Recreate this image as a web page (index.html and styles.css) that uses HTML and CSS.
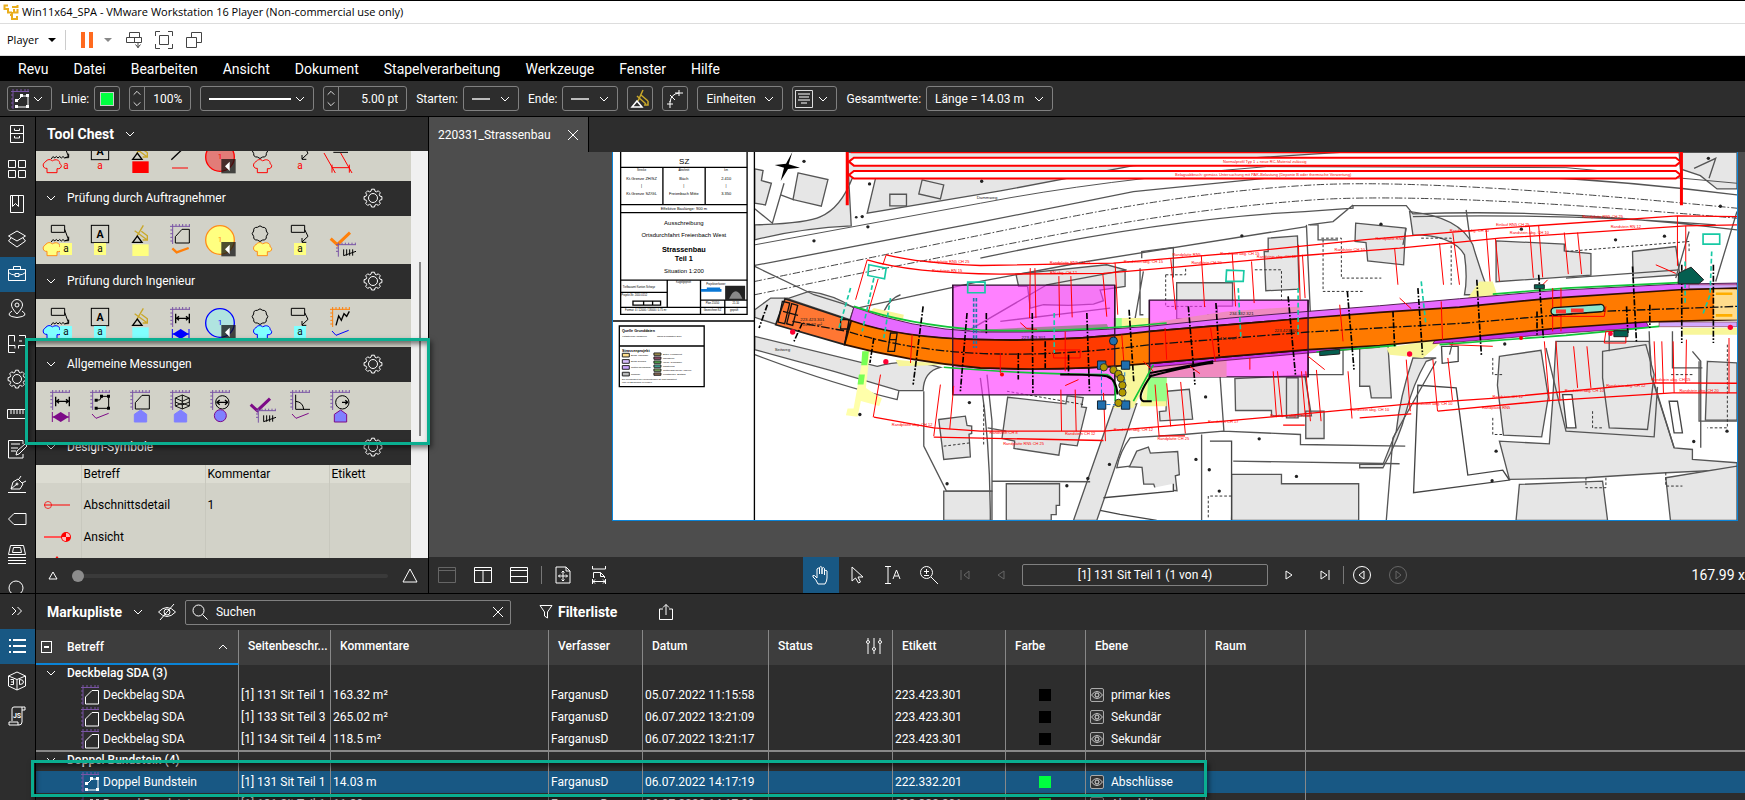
FILE: index.html
```html
<!DOCTYPE html>
<html lang="de">
<head>
<meta charset="utf-8">
<title>Win11x64_SPA - VMware Workstation 16 Player</title>
<link rel="stylesheet" href="styles.css">
</head>
<body>
<svg class="defs" aria-hidden="true">
  <symbol id="chev" viewBox="0 0 12 12"><path d="M2 4l4 4 4-4" class="ln"/></symbol>
  <symbol id="chevup" viewBox="0 0 12 12"><path d="M2 8l4-4 4 4" class="ln"/></symbol>
  <symbol id="gear" viewBox="0 0 20 20"><circle cx="10" cy="10" r="4.5" class="ln"/><path class="ln" d="M8.5 1.5h3l.5 2 1.5.6 1.800-1 2 2-1 1.800.6 1.500 2 .5v3l-2 .5-.6 1.500 1 1.800-2 2-1.800-1-1.500.6-.5 2h-3l-.5-2-1.500-.6-1.800 1-2-2 1-1.800-.6-1.500-2-.5v-3l2-.5.6-1.500-1-1.800 2-2 1.800 1 1.500-.6z" transform="translate(0 -.3)"/></symbol>
  <symbol id="ruler" viewBox="0 0 120 144"><path d="M38 24v60M30 31h60M31 42h7M31 53h7M31 64h7M31 75h7M48 24v7M58 24v7M68 24v7M78 24v7M88 24v7" stroke="var(--rule,#7a55a5)" stroke-width="3" fill="none"/></symbol>
  <symbol id="note-a" viewBox="0 0 120 144"><rect x="42" y="81" width="36" height="36" fill="var(--tint)"/><text x="60" y="108" text-anchor="middle" font-size="30" fill="var(--ink,#111)">a</text></symbol>
  <symbol id="cloudlet" viewBox="0 0 120 144"><path d="M50 119V106C38 108 34 92 45 87C50 78 62 78 66 84C76 76 90 82 88 92C98 96 92 110 80 107V119Z" transform="translate(2 0)" fill="var(--tint)" stroke="var(--edge)" stroke-width="3"/></symbol>
  <symbol id="t-callcloud" viewBox="0 0 120 144"><path d="M34 28h40v21H34zM74 40l11 30M34 78q5-12 10-3q5-9 10 0q5-9 10 0q5-9 10 0l12-5M86 62v12h-12" fill="none" stroke="#000" stroke-width="3"/><use href="#cloudlet" x="-31"/><use href="#note-a" x="18"/></symbol>
  <symbol id="t-text" viewBox="0 0 120 144"><rect x="34" y="28" width="52" height="52" fill="none" stroke="#000" stroke-width="3"/><text x="60" y="65" text-anchor="middle" font-size="32" font-weight="bold" fill="#000">A</text><use href="#note-a"/></symbol>
  <symbol id="t-mark" viewBox="0 0 120 144"><path d="M70 28L50 62M44 44L82 72M64 46l18 13M82 58v14h-14" fill="none" stroke="#c9a82a" stroke-width="4"/><path d="M38 79L52 60L66 79Z" fill="none" stroke="#000" stroke-width="4"/><rect x="37" y="85" width="49" height="35" fill="var(--tint)"/></symbol>
  <symbol id="t-area" viewBox="0 0 120 144"><use href="#ruler"/><path d="M46 81V62L66 40H88V81Z" fill="none" stroke="#000" stroke-width="3"/></symbol>
  <symbol id="t-stamp" viewBox="0 0 120 144"><circle cx="60" cy="72" r="43" fill="var(--tint2,var(--tint))" stroke="var(--edge)" stroke-width="4"/><text x="60" y="79" text-anchor="middle" font-size="24" fill="var(--edge)">1</text><rect x="64" y="78" width="43" height="43" fill="#111" opacity=".75"/><path d="M75 100l14-14v28z" fill="#fff"/></symbol>
  <symbol id="t-cloud" viewBox="0 0 120 144"><path d="M52 32q8-9 16 0q11-1 11 11q9 8 0 16q1 12-11 11q-8 9-16 0q-12 1-11-11q-9-8 0-16q-1-12 11-11z" fill="none" stroke="#000" stroke-width="3" transform="translate(0 2)"/><use href="#cloudlet"/></symbol>
  <symbol id="t-callout" viewBox="0 0 120 144"><path d="M34 28h40v21H34zM74 41l10 20l-18 17M66 66v13h13" fill="none" stroke="#000" stroke-width="3"/><use href="#note-a"/></symbol>
  <symbol id="t-count" viewBox="0 0 120 144"><path d="M32 68l20 18L90 50" fill="none" stroke="var(--mark)" stroke-width="9"/><path d="M55 80v42M48 86h60M48 96h7M48 106h7M66 80v6M76 80v6M86 80v6M96 80v6M106 80v6" stroke="#7a55a5" stroke-width="3" fill="none"/><path d="M71 100v19M80 100v19M89 100v19M98 100v19M71 119l37-13" fill="none" stroke="#000" stroke-width="3"/></symbol>
  <symbol id="t-length" viewBox="0 0 120 144"><use href="#ruler"/><path d="M47 44v29M88 44v29M50 58h35M57 52l-7 6 7 6M78 52l7 6-7 6" fill="none" stroke="#000" stroke-width="4"/><path d="M37 90v30M87 90v30M37 105h50" stroke="var(--mark)" stroke-width="3"/><path d="M38 105L62 90L86 105L62 120Z" fill="var(--mark)"/></symbol>
  <symbol id="t-poly" viewBox="0 0 120 144"><use href="#ruler"/><path d="M48 54h11L66 43H86V79H49" fill="none" stroke="#000" stroke-width="3"/><path d="M44 50h9v9h-9zM60 38h9v9h-9zM81 38h9v9h-9zM81 74h9v9h-9zM44 74h9v9h-9z" fill="#000"/><use href="#thincheck"/></symbol>
  <symbol id="thincheck" viewBox="0 0 120 144"><path d="M36 96l12 13L86 94" fill="none" stroke="var(--mark)" stroke-width="3"/></symbol>
  <symbol id="house" viewBox="0 0 120 144"><path d="M43 120V97L62 84L80 97V120Z" fill="#8080ff" stroke="var(--houseedge,#8080ff)" stroke-width="3"/></symbol>
  <symbol id="t-zig" viewBox="0 0 120 144"><use href="#ruler"/><path d="M48 79l8-28l8 13l8-20l8 8l8-15" fill="none" stroke="#000" stroke-width="4"/><use href="#thincheck"/></symbol>
  <symbol id="t-vol" viewBox="0 0 120 144"><use href="#ruler"/><path d="M46 48l21-9l21 9v24l-21 9l-21-9zM46 48l21 10l21-10M67 39v42M46 60l21 9l21-9M46 72l21-9l21 9" fill="none" stroke="#111" stroke-width="3"/></symbol>
  <symbol id="t-dia" viewBox="0 0 120 144"><use href="#ruler"/><circle cx="67" cy="61" r="20" fill="none" stroke="#000" stroke-width="3"/><path d="M51 61h32M59 54l-8 7 8 7M75 54l8 7-8 7" fill="none" stroke="#000" stroke-width="4"/><circle cx="61" cy="101" r="18" fill="#8080ff" stroke="#7d0a87" stroke-width="3"/></symbol>
  <symbol id="t-angle" viewBox="0 0 120 144"><use href="#ruler"/><path d="M47 38v44h43M47 58q22 2 24 24" fill="none" stroke="#000" stroke-width="3"/><use href="#thincheck"/></symbol>
  <symbol id="t-radius" viewBox="0 0 120 144"><use href="#ruler"/><circle cx="67" cy="61" r="20" fill="none" stroke="#000" stroke-width="3"/><path d="M66 61h16M76 55l7 6-7 6" fill="none" stroke="#000" stroke-width="4"/></symbol>
  <symbol id="r-area" viewBox="0 0 18 20"><path d="M2 0v20M0 2.500h18M0 6h2M0 10h2M0 14h2M0 18h2M6 0v2M10 0v2M14 0v2M17 0v2" stroke="#7a55a5" fill="none"/><path d="M4.500 19V12L11 5.500H17.500V19Z" fill="none" stroke="#fff"/></symbol>
  <symbol id="r-poly" viewBox="0 0 18 20"><path d="M2 0v20M0 2.500h18M0 6h2M0 10h2M0 14h2M0 18h2M6 0v2M10 0v2M14 0v2M17 0v2" stroke="#7a55a5" fill="none"/><path d="M6 12l5-5h6v11H6" fill="none" stroke="#fff"/><path d="M4 10h3v3H4zM9 5h3v3H9zM15 5h3v3h-3zM15 16h3v3h-3zM4 16h3v3H4z" fill="#fff"/></symbol>
  <symbol id="eye" viewBox="0 0 14 14"><rect x=".5" y=".5" width="13" height="13" rx="1.500" fill="#333" stroke="#aaa"/><path d="M1.500 7q5.500-7 11 0q-5.500 7-11 0z" fill="none" stroke="#ccc"/><circle cx="7" cy="7" r="2" fill="none" stroke="#ddd"/></symbol>
</svg>

<header class="titlebar">
  <svg class="vmlogo" viewBox="0 0 18 18"><path d="M6 2.500H2.500V7M2 6h4v3.500h4M10 4h5.500V2M12 6v3.500h3.500V6M10 9v7h5v-3M8 12h3" fill="none" stroke="#e9ae1c" stroke-width="2"/></svg>
  <span>Win11x64_SPA - VMware Workstation 16 Player (Non-commercial use only)</span>
</header>
<div class="playerbar">
  <button class="player">Player <i class="tri"></i></button>
  <button class="pause" aria-label="Pause"><i></i><i></i></button>
  <i class="tri grey"></i>
  <button aria-label="Senden"><svg width="18" height="18" viewBox="0 0 18 18" class="dark"><path d="M4.500 1.500h10v5h-10zM1.500 6.500h8v5h-8zM9.500 6.500h7v5h-7zM13 11v6M10.500 13.500l2.500 3 2.500-3"/></svg></button>
  <button aria-label="Vollbild"><svg width="18" height="18" viewBox="0 0 18 18" class="dark"><path d="M4.500 4.500h9v9h-9zM.500 5V.500H5M13 .500h4.500V5M17.500 13v4.500H13M5 17.500H.500V13"/></svg></button>
  <button aria-label="Unity"><svg width="18" height="18" viewBox="0 0 18 18" class="dark"><path d="M6.500 6V1.500h10v10H12M1.500 6.500h10v10h-10z"/></svg></button>
</div>
<nav class="menu">
  <button>Revu</button><button>Datei</button><button>Bearbeiten</button><button>Ansicht</button><button>Dokument</button><button>Stapelverarbeitung</button><button>Werkzeuge</button><button>Fenster</button><button>Hilfe</button>
</nav>
<div class="props">
  <button class="ctl w44" aria-label="Werkzeug"><svg width="20" height="20" viewBox="0 0 18 20"><use href="#r-poly"/></svg><svg class="ch"><use href="#chev"/></svg></button>
  <span class="grp">Linie:<button class="ctl w25" aria-label="Farbe"><i class="green"></i></button></span>
  <span class="ctl spin"><span class="ud"><svg><use href="#chevup"/></svg><svg><use href="#chev"/></svg></span><input value="100%" aria-label="Deckkraft" class="w46"></span>
  <button class="ctl linesel" aria-label="Linienart"><i class="line"></i><svg class="ch"><use href="#chev"/></svg></button>
  <span class="ctl spin"><span class="ud"><svg><use href="#chevup"/></svg><svg><use href="#chev"/></svg></span><input value="5.00 pt" aria-label="Linienbreite" class="w66"></span>
  <span class="grp">Starten:<button class="ctl w56" aria-label="Linienanfang"><i class="dash"></i><svg class="ch"><use href="#chev"/></svg></button></span>
  <span class="grp">Ende:<button class="ctl w56" aria-label="Linienende"><i class="dash"></i><svg class="ch"><use href="#chev"/></svg></button></span>
  <button class="ctl w25" aria-label="Hervorheben"><svg width="20" height="20" viewBox="0 0 20 20"><path d="M13 1L8 12M7 7l9 8M11 6l7 6M18 12v4h-4" fill="none" stroke="#c9a82a" stroke-width="1.500"/><path d="M2 18l5-6 5 6z" fill="none" stroke="#fff" stroke-width="1.500"/></svg></button>
  <button class="ctl w25" aria-label="Bogen"><svg width="20" height="20" viewBox="0 0 20 20" class="lt"><path d="M5 12v7M2 15h6M10 4h8M14 1v6M5 13q1-8 9-9M5 6l5 5"/></svg></button>
  <button class="ctl w86">Einheiten<svg class="ch"><use href="#chev"/></svg></button>
  <button class="ctl w44" aria-label="Beschriftung"><svg width="18" height="18" viewBox="0 0 18 18"><path d="M.500 .500h17v17H.500z" fill="none" stroke="#ddd"/><path d="M3 4h12M4 7h10M3 10h12M6 13h6" stroke="#bbb" stroke-width="1.500"/></svg><svg class="ch"><use href="#chev"/></svg></button>
  <span class="grp">Gesamtwerte:<button class="ctl total">Länge = 14.03 m<svg class="ch"><use href="#chev"/></svg></button></span>
</div>

<div class="work">
  <nav class="rail">
    <button aria-label="Dateizugriff"><svg viewBox="0 0 20 20" class="lt"><path d="M3.500 1.500h13v17h-13zM3.500 9.500h13M7.500 4.500v2h5v-2M7.500 12v2h5v-2"/></svg></button>
    <button aria-label="Miniaturansichten"><svg viewBox="0 0 20 20" class="lt"><path d="M1.500 1.500h7v7h-7zM11.500 1.500h7v7h-7zM1.500 11.500h7v7h-7zM11.500 11.500h7v7h-7z"/></svg></button>
    <button aria-label="Lesezeichen"><svg viewBox="0 0 20 20" class="lt"><path d="M3.500 1.500h13v17h-13zM5.500 1.500v11l3-3 3 3v-11"/></svg></button>
    <button aria-label="Ebenen"><svg viewBox="0 0 20 20" class="lt"><path d="M10 2l8.500 5-8.500 5-8.500-5zM4 9l-2.500 3 8.500 6 8.500-6L16 9"/></svg></button>
    <button class="on" aria-label="Tool Chest"><svg viewBox="0 0 20 20" class="lt"><path d="M1.500 5.500h17v11h-17zM6.500 5V2.500h7V5M1.500 8.500q3 2.500 6.500 2.500M18.500 8.500q-3 2.500-6.500 2.500M8 9.500v3h4v-3z"/></svg></button>
    <button aria-label="Orte"><svg viewBox="0 0 20 20" class="lt"><path d="M10 15Q4.500 9 4.500 6a5.500 5.500 0 0 1 11 0Q15.500 9 10 15zM5 12q-8 5 5 6.500q13-1.500 5-6.500"/><circle cx="10" cy="6" r="2"/></svg></button>
    <button aria-label="Räume"><svg viewBox="0 0 20 20" class="lt"><path d="M8 18.500H1.500v-17h6v6M12 1.500h6.500v10h-7v3M1.500 11.500H8v3M12 7h3"/></svg></button>
    <button aria-label="Einstellungen"><svg><use href="#gear"/></svg></button>
    <button aria-label="Messungen"><svg viewBox="0 0 20 20" class="lt"><path d="M.500 5.500h19v9H.500zM4 6v4M7 6v4M10 6v4M13 6v4M16 6v4"/></svg></button>
    <button aria-label="Formular"><svg viewBox="0 0 20 20" class="lt"><path d="M16 15v4H1.500V1.500H16V5M4 5h9M4 9h7M4 12h5M9 16l1-4 8-7 2 2-8 8z"/></svg></button>
    <button aria-label="Signaturen"><svg viewBox="0 0 20 20" class="lt"><path d="M1 18.500h18M4 15l2-7 5-3 5 5-3 5zM4 15l6-5M12 5l2-3M15 9l4-2"/><circle cx="10" cy="10" r="1"/></svg></button>
    <button aria-label="Etiketten"><svg viewBox="0 0 20 20" class="lt"><path d="M7 4.500h12v11H7l-5.500-5.500z"/></svg></button>
    <button aria-label="Sets"><svg viewBox="0 0 20 20" class="lt"><path d="M3.500 1.500h13l2 9h-17zM6.500 3.500h7l1 5h-9zM1 13.500h18M1 16.500h18M1 19.500h18"/></svg></button>
    <button aria-label="Suche"><svg viewBox="0 0 20 20" class="lt"><circle cx="9" cy="9" r="7"/><path d="M14 14l4 5"/></svg></button>
  </nav>
  <section class="chest">
    <h2>Tool Chest <svg class="ch"><use href="#chev"/></svg></h2>
    <div class="chestbody">
      <div class="sets">
        <div class="tools first red">
          <svg><use href="#t-callcloud"/></svg><svg><use href="#t-text"/></svg><svg><use href="#t-mark"/></svg>
          <svg viewBox="0 0 120 144"><path d="M34 80L70 46" stroke="#000" stroke-width="4"/><path d="M36 105h48" stroke="red" stroke-width="3"/></svg>
          <svg><use href="#t-stamp"/></svg><svg><use href="#t-cloud"/></svg><svg><use href="#t-callout"/></svg>
          <svg viewBox="0 0 120 144"><path d="M12 60l34 60M62 60l34 60M36 104h52M36 95v24M88 95v24" stroke="red" stroke-width="3"/><path d="M40 58h44" stroke="#000" stroke-width="3"/></svg>
        </div>
        <h3><svg class="ch"><use href="#chev"/></svg>Prüfung durch Auftragnehmer<svg class="gear"><use href="#gear"/></svg></h3>
        <div class="tools yellow">
          <svg><use href="#t-callcloud"/></svg><svg><use href="#t-text"/></svg><svg><use href="#t-mark"/></svg>
          <svg viewBox="0 0 120 144"><use href="#t-area"/><path d="M37 97l13 12L86 96" fill="none" stroke="#ff800a" stroke-width="7"/></svg>
          <svg><use href="#t-stamp"/></svg><svg><use href="#t-cloud"/></svg><svg><use href="#t-callout"/></svg><svg><use href="#t-count"/></svg>
        </div>
        <h3><svg class="ch"><use href="#chev"/></svg>Prüfung durch Ingenieur<svg class="gear"><use href="#gear"/></svg></h3>
        <div class="tools cyan">
          <svg><use href="#t-callcloud"/></svg><svg><use href="#t-text"/></svg><svg><use href="#t-mark"/></svg><svg><use href="#t-length"/></svg>
          <svg><use href="#t-stamp"/></svg><svg><use href="#t-cloud"/></svg><svg><use href="#t-callout"/></svg><svg class="orule"><use href="#t-zig"/></svg>
        </div>
        <h3><svg class="ch"><use href="#chev"/></svg>Allgemeine Messungen<svg class="gear"><use href="#gear"/></svg></h3>
        <div class="tools purple">
          <svg><use href="#t-length"/></svg><svg><use href="#t-poly"/></svg>
          <svg viewBox="0 0 120 144"><use href="#t-area"/><use href="#house"/></svg>
          <svg viewBox="0 0 120 144"><use href="#t-vol"/><use href="#house"/></svg>
          <svg><use href="#t-dia"/></svg><svg><use href="#t-count"/></svg><svg><use href="#t-angle"/></svg>
          <svg viewBox="0 0 120 144" class="hedge"><use href="#t-radius"/><use href="#house"/></svg>
        </div>
        <h3><svg class="ch"><use href="#chev"/></svg>Design-Symbole<svg class="gear"><use href="#gear"/></svg></h3>
        <table class="symbols">
          <colgroup><col class="c45"><col class="c124"><col class="c124"><col></colgroup>
          <thead><tr><th></th><th>Betreff</th><th>Kommentar</th><th>Etikett</th></tr></thead>
          <tbody>
            <tr class="tall"><td><svg viewBox="0 0 30 12"><circle cx="5" cy="6" r="3.500" fill="none" stroke="#e33"/><path d="M1 6h26" stroke="red"/></svg></td><td>Abschnittsdetail</td><td>1</td><td></td></tr>
            <tr><td><svg viewBox="0 0 30 12"><path d="M1 6h18" stroke="#f55" stroke-width="2"/><circle cx="23" cy="6" r="5" fill="red"/><path d="M23 6V2a4 4 0 0 1 4 4zM23 6v4a4 4 0 0 1-4-4z" fill="#fbb"/></svg></td><td>Ansicht</td><td></td><td></td></tr>
            <tr class="tip"><td><svg viewBox="0 0 30 12"><path d="M14 1l3 4h-6z" fill="red"/></svg></td><td></td><td></td><td></td></tr>
          </tbody>
        </table>
      </div>
      <div class="gutter"><i></i></div>
    </div>
    <div class="sizer">
      <svg width="10" height="9" viewBox="0 0 10 9" class="lt"><path d="M5 1L1 8h8z"/></svg>
      <input type="range" min="0" max="100" value="0" aria-label="Symbolgrösse">
      <svg width="16" height="15" viewBox="0 0 16 15" class="lt"><path d="M8 1L1 14h14z"/></svg>
    </div>
    <div class="callbox tools-box"></div>
  </section>
  <main class="doc">
    <div class="tabs"><div class="tab">220331_Strassenbau<button aria-label="Schliessen"><svg width="12" height="12" viewBox="0 0 12 12" class="lt"><path d="M1 1l10 10M11 1L1 11"/></svg></button></div></div>
    <div class="canvas">
      <svg class="plan" viewBox="36 21 3378 1107" preserveAspectRatio="xMinYMin slice">
        <defs>
          <path id="road" d="M752 528Q900 580 1140 585Q1400 592 1650 560L2125 520L2340 503L2580 487L2860 460L3240 435L3414 430V525L3140 532L2880 550L2580 580L2340 603L2125 615L1890 635L1640 657Q1400 680 1140 670Q920 650 732 600Z"/>
          <clipPath id="c1"><path d="M1057 421h487v330h-487zM1648 466h477v231h-477z"/></clipPath>
        </defs>
        <rect x="36" y="21" width="3378" height="1107" fill="#fff"/>
        <!-- parcels and roads -->
        <g fill="#e6e6e6" stroke="#555" stroke-width="4">
          <path d="M462 240Q620 235 660 215Q720 190 755 100H825L800 205L1200 138L1600 62L2220 22H1100L740 22L752 243Q600 250 462 285Z"/>
          <path d="M462 72l25 5l-5 30l30 8l-18 65l-32-5zM592 84l90 20l-20 80l-85-20zM868 148h50v35h-50zM965 105l65 15l-10 42l-65-15z"/>
          <path d="M462 495L510 460H560L530 540L462 518ZM625 440Q700 450 760 490L748 525L560 462Z"/>
          <path d="M462 575L830 665Q920 640 1020 668Q970 680 968 738H895L700 680L462 615Z"/>
          <path d="M1015 825l80-10l5 28l14 2v22l-8 2l4 68l-80 8zM1030 1040h145v88h-145z"/>
          <path d="M1247 388L1520 360L1575 375V425L1500 436L1510 468L1480 478L1405 482L1330 480L1290 490L1282 425L1255 425Z"/>
          <path d="M1222 758l175 20l4-24l48 5l-5 28l15 2l-28 115l-50-6l-5 34l-135-20l2-22l-38-8zM1218 1018h160v65h-10v28h-15v17h-135z"/>
          <path d="M1730 414h168v70h-46v26h-28v12h-94zM2005 280l88-7l5 160l-100 5l-5-118h12zM1700 740l68-6l10 90l-98 5l-2-28l20-2zM1610 920l35-12l6 18l82-5l5 70l-12 3l5 45l-65-5l-5-15h-30l-5-50l-38-2z"/>
          <path d="M1905 702l210-10l20 122h-120v-16h-108zM2060 700h35v120h-35zM2118 800h55v82h-55zM1895 990h150v28h232v110h-382z"/>
          <path d="M1540 785L1610 778L1490 1128H1420Z"/>
          <path d="M2268 235l150 15l-6 110l-108-12l-5-55l-33-3z"/>
          <path d="M2430 200Q2580 215 2620 300Q2640 370 2670 450H2595Q2605 400 2595 330Q2560 270 2440 270Z"/>
          <path d="M2690 288l205 10v20l80 8v65l-285 20zM3100 320l130-15l12 85l-140 10z"/>
          <path d="M2280 600h85l10 160h-60l-5-35h-30zM2510 640L2440 640Q2400 760 2390 860L2350 960H2280V970H2350Q2400 880 2420 800Q2440 720 2480 650Z"/>
          <path d="M2870 590L3150 590L3160 700L3225 910L3280 915V945L3414 955V975L3200 985L2960 1000L2730 1005L2700 890L2850 898L2860 770Z"/>
          <path d="M2700 635l125-18l22 140l-20 120l-115-5l-18-150zM3010 620l130-20l25 90l-20 165l-115-5l-20-150z"/>
          <path d="M2760 1020l250-10l15 118h-275zM3200 1000l214-35v163h-200zM3325 650l89 5v172h-95zM3240 22h174v110h-60l-50-40l-60-20z"/>
        </g>
        <g fill="#fff" stroke="#444" stroke-width="4">
          <path d="M2455 722l115 8l35 262l105-15l20 30l-288 38zM2526 605h50v45l-48 6z"/>
          <path d="M1830 890h65v238M1510 1060l210-20v-22M1500 1098l60 12l110 18M2890 750h28l12 100h-28zM3210 770h25l15 95h-25z"/>
        </g>
        <!-- railway and parcel lines -->
        <g fill="none" stroke="#555" stroke-width="4">
          <path d="M462 362L1140 232L1600 140L2115 88M2400 85Q2900 85 3414 150M462 365L640 450L770 490M770 490L1140 410L1460 350L2120 245"/>
          <path d="M1140 340Q1700 220 2115 200L2260 190V182H2420l20 25Q2900 190 3414 255M2260 180l-60 50l-75 10M2420 250l-10 50M2440 215Q2900 205 3350 240"/>
          <path d="M462 300L1140 175Q1500 105 2000 65L2900 68L3414 115" stroke-width="3"/>
          <path d="M462 630Q700 720 890 765L895 740M970 740V905L1038 1040H1175V830L1160 690M1162 850L1218 860M1175 1010L1470 1012M460 190l55 45l35-120M540 150l40 15M1100 560L1340 420L1580 375M900 450Q870 460 850 500"/>
          <path d="M1140 700Q1170 900 1170 1128M1200 530L1530 490M1630 380l-30 170M1870 860L1750 870L1590 880Q1560 920 1550 970l40-5M2120 240l12 270M2130 240l25 0v45h60M1630 510h-10v-140M1625 340v-20l95-12v90M1860 690l12 170l230 10v30l315 5M1805 870v258M1900 950L2400 958M2230 600v90h-120"/>
          <path d="M2600 195l12 90M3150 560l5 130l70 220M2840 610l60 250l265 17l10-150M2560 590l-10 40M3330 100l20-60l-65 30M3030 560v60M3270 260L3230 400M3414 200L3350 410M2510 650L2380 880L2360 1128M3280 620l25 30v260M3220 560v110h90M3300 650v180h114M2900 400l340-25"/>
        </g>
        <g fill="none" stroke="#444" stroke-width="3" stroke-dasharray="22 6 5 6">
          <path d="M462 410Q900 320 1340 230T2140 120T3414 190M462 450Q900 360 1340 275T2140 165T3414 220"/>
        </g>
        <g fill="none" stroke="#333" stroke-width="3" stroke-dasharray="8 6">
          <path d="M1697 390h60v-25M1697 390v95h120M1965 375h80v90M2165 280h60v120h120M2170 285v155h120M2465 280h90v140M2680 640v50h30M2900 320l370-30v30M2680 820v50h30M2980 800v50h30M1220 740l230 40M1895 1055h-70v70M3280 690h-70M3385 600v250h-60M1030 905l80-10M1150 780v120M2960 1000v30h60v-30M3200 985v40h50"/>
        </g>
        <!-- greens and yellows -->
        <path d="M790 620h18l-12 110l48 32l-8 22l-55-15l-10 48l-35-5l5-20h18z" fill="#ffffaa"/>
        <path d="M785 620h20l-5 42h-18zM775 690h18l-4 30h-18z" fill="#7f5"/>
        <path d="M820 490l90 20l-5 25l-100-30zM885 645l170 15l-160 5zM1545 520h105v170l-50 100h-60l40-60l-35-50zM1640 690h60v95h-80zM2360 610l180-30l-70 60l-100-10zM2640 410l40 0l15 45l-90 5zM3250 570h164v-20h-164z" fill="#f8f69a"/>
        <path d="M1540 520h25v60h-25zM1645 695h55v75h-60z" fill="#9f8"/>
        <!-- markup squares -->
        <g fill="#ff33ff" fill-opacity=".62" stroke="#301030" stroke-width="4"><path d="M1057 421h487v330h-487zM1648 466h477v231h-477z"/></g>
        <path d="M1648 535L1880 500L2100 485V500L1648 548ZM1650 660L1880 640V697H1650Z" fill="#f08ac0"/>
        <path d="M1140 555L1520 538L1530 560L1140 578Z" fill="#a8809c"/>
        <!-- pavement -->
        <path d="M760 487Q920 550 1140 562Q1400 565 1648 545L1890 520L2125 500L2340 483L2580 462L2870 437L3230 418L3414 415V435L3240 437L2860 462L2580 489L2340 506L2125 523L1650 563Q1400 592 1140 585Q900 580 748 528Z" fill="#e66aff" stroke="#502050" stroke-width="3"/>
        <path d="M2510 580L2900 547L3140 530L3150 548L2900 565L2600 590L2500 597ZM1650 657L2125 614L2340 602V608L2125 625L1650 668Z" fill="#c932e8" stroke="#402" stroke-width="2"/>
        <path d="M3270 420h144v12h-144zM3180 532h234v14h-234z" fill="#d2a8ff" stroke="#844" stroke-width="2"/>
        <!-- carriageway -->
        <path d="M553 462L752 528L732 600L525 540Z" fill="#ff7733" stroke="#222" stroke-width="5"/>
        <use href="#road" fill="#ff7a00" stroke="#301000" stroke-width="5"/>
        <use href="#road" fill="#ff3a00" stroke="#301000" stroke-width="5" clip-path="url(#c1)"/>
        <path d="M1057 421v330M1544 421v330M1648 466v231M2125 466v231" stroke="#301030" stroke-width="4"/>
        <path d="M3344 434h70v91h-70z" fill="#ffdc8c"/><path d="M3350 447h50M3350 512h50" stroke="#ffae00" stroke-width="8"/>
        <path d="M575 530L740 560Q950 625 1200 628Q1400 632 1650 600L2125 562L2600 535L3000 500L3414 485" fill="none" stroke="#111" stroke-width="4" stroke-dasharray="26 6 6 6"/>
        <path d="M760 485Q920 540 1140 556Q1400 565 1700 535M1030 668Q1300 690 1520 690Q1550 700 1545 770M1660 660L1600 770M2520 600L2900 572L3180 545M2680 448L2900 430L3270 412M2150 622l240-20" fill="none" stroke="#12c53a" stroke-width="5"/>
        <path d="M745 528l-13 72M545 470l22 5l-15 62l-20-5zM573 477l18 5l-15 60l-18-5zM720 525h25v28h-25zM870 565h20l-8 55h-20zM547 500l45 12M868 585h20" fill="none" stroke="#111" stroke-width="4"/>
        <path d="M1380 690Q1480 690 1520 695Q1550 705 1552 750M1655 690Q1605 760 1630 770h25M1650 695Q1780 660 1840 655M1650 685L1840 650" fill="none" stroke="#000" stroke-width="6"/>
        <!-- long boundary bars -->
        <g fill="none" stroke="#f00" stroke-width="6">
          <path d="M740 21v160M3247 21v160" stroke-width="9"/>
          <path d="M750 22H3240M745 50l15-12H3230l15 12l-15 12H760zM745 90l15-12H3230l15 12l-15 11H760z" fill="#fff"/>
        </g>
        <!-- dimension chains -->
        <g fill="none" stroke="#f00" stroke-width="3">
          <path d="M857 330Q960 355 1140 362L1540 355L1900 325L2290 285L2560 262L2700 250L3235 213L3414 215M800 345Q930 385 1200 388L1510 386L1720 368L2110 332L2400 310L2700 280L3260 243L3414 240M820 818L1000 850L1140 860L1510 860L1700 845L2040 815L2430 778L2700 760L3170 715L3414 716M1000 878L1510 888M1675 874h80M2050 842h65M2280 820L2435 808M2515 800L2850 768L3220 745L3414 745" stroke-width="4"/>
          <path d="M857 330l-10 30M800 345l-35 120M833 402l-30 100M840 690l-22 128M1020 720l-20 155M1060 724l-12 130M1290 370l-2 150M1304 370l3 150M1376 394l2 124M1412 394l4 124M1508 386l12 130M1545 355l8 155M1712 340l15 155M1804 332l10 155M1897 325l10 160M1955 350l8 125M2096 300l5 165M2108 330l8 130M2385 310l10 110M2520 295l12 125M2560 265l20 155M2660 255l12 155M2688 280l12 130M2790 244l12 155M2818 243l12 155M2895 263l12 125M2935 263l12 125M3235 213v150M3260 243v140M1382 735l2 125M1425 735l3 125M1510 745l6 145M1665 720l12 152M1700 716l12 130M1742 712l14 155M2020 680l10 138M2033 680l14 138M2105 680l12 138M2118 680l14 150M2150 676l14 154M2245 680l12 142M2420 645l12 155M2500 645l14 155M2545 640l14 127M2835 590l15 180M2870 590l12 178M2923 605l12 125M2963 605l12 125M3165 590l5 125M3188 590l5 155M3222 590l3 155M3262 585l-2 130M3390 580v165M1200 625v60M1395 560v120M1565 570l6 80M1695 550l5 95M1832 550l14 100M2220 480l10 110M2525 470l4 115M935 570l-5 85M2860 430v130M2885 430v130M1360 640h80v-24h-80zM2855 515h160l5-30M3020 560h60v35h-65z"/>
          <path d="M1260 534l20 18l30 2M1435 705l-40 18M1770 665l30 22M2125 635l50 40M2400 460l35 32M2680 605l-130 -5M3170 360l60 26M2845 405l-20 20M1630 650l30 30M1950 640v35"/>
        </g>
        <g fill="#f00"><circle cx="576" cy="562" r="8" fill="#f03"/><circle cx="856" cy="651" r="8" fill="#f03"/><circle cx="1205" cy="690" r="6"/><circle cx="2430" cy="628" r="8" fill="#f03"/><circle cx="3034" cy="567" r="7" fill="#f03"/><circle cx="3394" cy="548" r="8" fill="#f03"/><circle cx="2765" cy="580" r="6"/></g>
        <!-- cross sections -->
        <g fill="none" stroke="#000" stroke-width="5" stroke-dasharray="18 5 5 5">
          <path d="M500 480l-25 70M605 535l-25 55M820 580l-12 75M968 485l-30 235M1100 505l-20 235M1158 505v65M1296 505l2 240M1460 505l8 235M1587 495l14 215M1765 485l20 235M1848 475l10 165M2065 455l22 235M2243 440l20 235M2455 430l14 200M2632 405l14 230M2818 390l14 190M3100 365l12 230M3248 360v235M3343 360v235M1254 625v80M1335 590v80M1405 630v60M2380 500l5 105M2813 500v70M3082 485l4 80M3152 480v70"/>
        </g>
        <g fill="none" stroke="#17c9a4" stroke-width="5">
          <path d="M805 360l52 10l-5 32l-50-10zM1102 412h52v32h-52zM1880 376l52 2l-2 32h-52zM3312 268h50v30h-50z"/>
          <path d="M750 430l-35 120M820 400l-35 160M870 460l-20 120M1362 505v120M1915 430l8 150M2095 430v140M2465 410l14 130M3258 350v130M3338 320l-5 130l-22 60" stroke-dasharray="14 8"/>
          <path d="M1120 460v150M1128 460v150" stroke="#2078a8" stroke-dasharray="10 6"/>
        </g>
        <path d="M3238 385l38-18l38 38l-15 12h-62zM2805 420h30v12h-30zM3044 558h42v18h-42zM2160 620l60-6v14l-60 5z" fill="#055f50" stroke="#222" stroke-width="3"/>
        <rect x="2855" y="484" width="160" height="22" rx="11" fill="#8ce6cc" stroke="#111" stroke-width="4" transform="rotate(-4 2935 495)"/><path d="M2870 500h30M2915 497h38" stroke="#f33" stroke-width="12"/>
        <!-- selected polyline handles -->
        <path d="M1504 655v125h70V665" fill="none" stroke="#1a7fd4" stroke-width="3" stroke-dasharray="12 8"/>
        <g fill="#206fae" stroke="#123" stroke-width="3"><path d="M1492 649h25v25h-25zM1564 649h25v25h-25zM1492 769h25v25h-25zM1564 769h25v25h-25z"/><circle cx="1540" cy="589" r="12"/></g>
        <g fill="#b29a00" stroke="#333" stroke-width="3"><circle cx="1511" cy="668" r="11"/><circle cx="1540" cy="676" r="11"/><circle cx="1555" cy="688" r="11"/><circle cx="1562" cy="701" r="11"/><circle cx="1567" cy="722" r="11"/><circle cx="1567" cy="744" r="11"/><circle cx="1555" cy="775" r="11"/></g>
        <g fill="#222"><circle cx="640" cy="288" r="5"/><circle cx="610" cy="49" r="5"/><circle cx="807" cy="117" r="5"/><circle cx="785" cy="215" r="5"/><circle cx="767" cy="217" r="4"/><circle cx="802" cy="246" r="5"/><circle cx="1107" cy="774" r="5"/><circle cx="778" cy="810" r="5"/><circle cx="1040" cy="1018" r="5"/><circle cx="1144" cy="109" r="5"/><circle cx="1926" cy="273" r="5"/><circle cx="1817" cy="757" r="5"/><circle cx="1788" cy="945" r="5"/><circle cx="1828" cy="976" r="5"/><circle cx="1858" cy="1040" r="5"/><circle cx="1528" cy="960" r="5"/><circle cx="1463" cy="1002" r="5"/><circle cx="1400" cy="1024" r="5"/><circle cx="1978" cy="883" r="5"/><circle cx="2090" cy="996" r="5"/><circle cx="2344" cy="238" r="5"/><circle cx="2766" cy="253" r="5"/><circle cx="3049" cy="285" r="5"/><circle cx="3196" cy="274" r="5"/><circle cx="2678" cy="1009" r="5"/><circle cx="2690" cy="920" r="5"/><circle cx="3284" cy="891" r="5"/><circle cx="3384" cy="860" r="5"/><circle cx="2716" cy="598" r="5"/><circle cx="3364" cy="184" r="5"/><circle cx="3328" cy="40" r="5"/></g>
        <path d="M575 21L564 58L598 68L562 72L540 108L550 68L522 60L556 56Z" fill="#000"/>
        <!-- labels -->
        <g class="lab">
          <text x="1995" y="53">Normalprofil Typ 1 + neue RC-Material zulässig</text><text x="1990" y="93">Belagsabbruch: gemäss Untersuchung mit PAK-Belastung (Deponie B oder thermische Verwertung)</text>
          <text x="1046" y="354">Randplatte RN5 CH 25</text><text x="1040" y="383">Randstein RN 15</text><text x="1410" y="358">Randplatte RN5 CH 25</text><text x="1390" y="387">RN abg. CH 12</text><text x="1630" y="355">Randstein abg. CH 15</text><text x="1760" y="333">Randplatte RN5</text><text x="1920" y="330">Randstein abg. CH 15</text><text x="1820" y="358">Randstein CH 20</text><text x="2030" y="340">Randstein abg. CH 10</text><text x="2250" y="320">Randstein CH 10</text><text x="2370" y="287">Randplatte RN5</text><text x="2610" y="262">Randstein abg. CH 10</text><text x="2740" y="243">Einlauf RN5 CH 25</text><text x="3010" y="220">Randplatte RN5 CH 25</text><text x="3080" y="248">Randstein RN 12</text><text x="2790" y="268">Randstein abg. CH 10</text>
          <text x="935" y="846">Randplatte abg. CH 12</text><text x="1210" y="870">Randstein CH 8</text><text x="1440" y="872">Randstein CH 12</text><text x="1270" y="903">Randplatte RN5 CH 25</text><text x="1600" y="859">Randstein abg. CH 12</text><text x="1720" y="886">Randplatte CH 25</text><text x="1870" y="835">Randstein CH 17</text><text x="2070" y="818">Randstein abg. CH 10</text><text x="2310" y="798">Randstein abg. CH 10</text><text x="2500" y="780">Randstein abg. CH 10</text><text x="2725" y="760">Randstein CH 12</text><text x="2690" y="793">Randplatte RN5</text><text x="2955" y="742">Randstein abg. CH 10</text><text x="3080" y="727">Randstein abg. CH 12</text><text x="3215" y="708">Randstein abg. CH 15</text><text x="3300" y="742">Randstein abg. CH 20</text>
        </g>
        <g class="lab k"><text x="635" y="530">223.423.301</text><text x="635" y="544">163.32 m²</text><text x="1300" y="583">223.423.301</text><text x="1925" y="512">234.332.321</text><text x="2060" y="562">223.423.301</text><text x="1885" y="587">118.5 m²</text><text x="1160" y="162">Dammweg</text><text x="545" y="620">Seitweg</text></g>
        <!-- title block -->
        <path d="M36 21h425v508H36z" fill="#fff"/><path d="M461 21v1107M36 529h425" stroke="#000" stroke-width="4"/>
        <g fill="#fff" stroke="#000" stroke-width="4"><path d="M59 10h380v499H59z"/><path d="M55 544h255v182H55zM55 604h255M59 67h380M59 179h380M59 203h380M59 406h380M186 67v112M313 67v112M199 406v82M299 406v103M59 443h140M299 466h140M59 488h380M372 466v43M96 469h83v12H96zM128 469v12M155 469v12"/></g>
        <path d="M300 433h62v8h-62zM318 428h40v5h-40z" fill="#0a78d6"/><path d="M373 423h60v43h-60z" fill="#222"/><path d="M385 462q20-45 40 0" fill="#888"/>
        <g class="tb"><text x="250" y="57" class="h">SZ</text><text x="122" y="105" class="s">Kt.Grenze ZH/SZ</text><text x="122" y="127" class="s">|</text><text x="122" y="151" class="s">Kt.Grenze SZ/GL</text><text x="249" y="105" class="s">Bäch</text><text x="249" y="127" class="s">|</text><text x="249" y="151" class="s">Freienbach Mitte</text><text x="376" y="105" class="s">2.410</text><text x="376" y="127" class="s">|</text><text x="376" y="151" class="s">3.350</text><text x="122" y="79" class="xs">Strecke</text><text x="249" y="79" class="xs">Abschnitt</text><text x="376" y="79" class="xs">km</text>
          <text x="249" y="195" class="s">Effektive Baulänge: 900 m</text><text x="249" y="239">Ausschreibung</text><text x="249" y="276">Ortsdurchfahrt Freienbach West</text><text x="249" y="323" class="b">Strassenbau</text><text x="249" y="350" class="b">Teil 1</text><text x="249" y="386">Situation 1:200</text>
          <text x="114" y="430" class="xs">Tiefbauamt Kanton Schwyz</text><text x="100" y="453" class="xs">Projekt-Nr. 2010.0152</text><text x="135" y="500" class="xs">Format: 4 / 12000 / 18000 / 0.75 m²</text><text x="335" y="479" class="xs">Plan 21050</text><text x="405" y="479" class="xs">21.10</text><text x="335" y="500" class="xs">Gezeichnet SZ</text><text x="400" y="500" class="xs">geprüft</text><text x="248" y="415" class="xs">Kugelgeprüft</text><text x="345" y="422" class="xs">Projektverfasser</text>
        </g>
        <g class="legend">
          <text x="63" y="562" class="b2">Quelle Grunddaten</text><text x="63" y="622" class="b2">Strassenprojekt</text><text x="64" y="578">Katasterplan, swissTLM</text><text x="168" y="578">Stand Grunddaten 2019</text>
          <text x="90" y="634">Belag, Fahrbahn</text><text x="90" y="653">Belag Gehweg</text><text x="90" y="671">Trottoir überfahrbar</text><text x="90" y="691">Rückbau</text><text x="186" y="631">Beton, Fundament</text><text x="186" y="643">Randsteine</text><text x="186" y="655">Wiese, Grünfläche</text><text x="186" y="667">Pflästerung</text><text x="186" y="679">Trottoirabsenkung / Mauern</text><text x="186" y="691">Kunstbauten, Bestand</text><text x="63" y="706">Die Genauigkeit der Werkleitungen ist nicht garantiert</text><text x="63" y="716">und vor Baubeginn zu prüfen.</text>
        </g>
        <g stroke="#222" stroke-width="3"><path d="M64 626h21v11H64z" fill="#ffdf8c"/><path d="M64 645h21v11H64z" fill="#d9bfff"/><path d="M64 663h21v11H64z" fill="#cba6ff"/><path d="M64 683h21v11H64z" fill="#bbb"/><path d="M159 625h21v7h-21z" fill="#b5a050"/><path d="M159 637h21v7h-21z" fill="#a05070"/><path d="M159 649h21v7h-21z" fill="#5b5"/><path d="M159 661h21v7h-21z" fill="#4ba"/><path d="M159 673h21v7h-21z" fill="#8b6"/><path d="M159 685h21v7h-21z" fill="#987058"/></g>
      </svg>
    </div>
    <div class="viewbar">
      <div class="vl">
        <button aria-label="Einzeln"><svg width="18" height="18" viewBox="0 0 18 18" class="dim"><path d="M.500 1.500h17v15H.500zM.500 4.500h17"/></svg></button>
        <button aria-label="Vertikal teilen"><svg width="18" height="18" viewBox="0 0 18 18" class="lt"><path d="M.500 1.500h17v15H.500zM.500 4.500h17M9 4.500v12"/></svg></button>
        <button aria-label="Horizontal teilen"><svg width="18" height="18" viewBox="0 0 18 18" class="lt"><path d="M.500 1.500h17v15H.500zM.500 4.500h17M.500 10.500h17"/></svg></button>
        <i class="sep"></i>
        <button aria-label="Seite einpassen"><svg width="18" height="18" viewBox="0 0 18 18" class="lt"><path d="M2 1h10l4 4v12H2zM12 1v4h4M9 5v10M4.500 10h9M7.500 6.500L9 5l1.500 1.500M7.500 13.500L9 15l1.500-1.500M6 8.500L4.500 10 6 11.500M12 8.500l1.500 1.500-1.500 1.500"/></svg></button>
        <button aria-label="Breite einpassen"><svg width="18" height="18" viewBox="0 0 18 18" class="lt"><path d="M2.500 0v3h13V0M2.500 18v-5M15.500 18v-5M3 15.500h12M3.500 12V6.500h7l4 4V12M10.500 6.500v4h4M5 13.500l-2 2 2 2M13 13.500l2 2-2 2"/></svg></button>
      </div>
      <div class="vc">
        <button class="on" aria-label="Verschieben"><svg width="20" height="20" viewBox="0 0 20 20" class="lt"><path d="M7 19Q5 14 2 12q-1-2 1.500-1.500L6 13V4q1.500-2 2.500 0v5V2.500q1.500-2 2.500 0V9V3.500q1.500-2 2.500 0V10V6q1.500-1.500 2.500 0v7q0 3-2 6z"/></svg></button>
        <button aria-label="Auswählen"><svg width="18" height="18" viewBox="0 0 18 18" class="lt"><path d="M4 1v14l3.500-3 3 5 2-1-2.500-5H15z"/></svg></button>
        <button aria-label="Text auswählen"><svg width="18" height="20" viewBox="0 0 18 20" class="lt"><path d="M1 1.500h6M4 1.500v17M1 18.500h6M9 14l3.500-9 3.500 9M10.500 11h4"/></svg></button>
        <button aria-label="Zoom"><svg width="20" height="20" viewBox="0 0 20 20" class="lt"><circle cx="7.500" cy="7.500" r="6"/><path d="M12 12l7 7M5 6.500h5M7.500 4v5M5 10.500h5"/></svg></button>
        <button aria-label="Erste Seite"><svg width="10" height="10" viewBox="0 0 10 10" class="dim"><path d="M1 0v10M9 1L4 5l5 4z"/></svg></button>
        <button aria-label="Vorherige Seite"><svg width="10" height="10" viewBox="0 0 10 10" class="dim"><path d="M8 1L2 5l6 4z"/></svg></button>
        <input class="page" value="[1] 131 Sit Teil 1 (1 von 4)" aria-label="Seite">
        <button aria-label="Nächste Seite"><svg width="10" height="10" viewBox="0 0 10 10" class="lt"><path d="M2 1l6 4-6 4z"/></svg></button>
        <button aria-label="Letzte Seite"><svg width="10" height="10" viewBox="0 0 10 10" class="lt"><path d="M9 0v10M1 1l6 4-6 4z"/></svg></button>
        <i class="sep"></i>
        <button aria-label="Zurück"><svg width="20" height="20" viewBox="0 0 20 20" class="lt"><circle cx="10" cy="10" r="8.500"/><path d="M12 6l-5 4 5 4z"/></svg></button>
        <button aria-label="Vor"><svg width="20" height="20" viewBox="0 0 20 20" class="dim"><circle cx="10" cy="10" r="8.500"/><path d="M8 6l5 4-5 4z"/></svg></button>
      </div>
      <span class="dims">167.99 x</span>
    </div>
  </main>
</div>

<div class="bottom">
  <nav class="rail">
    <button aria-label="Mehr"><svg viewBox="0 0 20 20" class="lt"><path d="M5 6l4 4-4 4M10.500 6l4 4-4 4"/></svg></button>
    <button class="on" aria-label="Markupliste"><svg viewBox="0 0 20 20"><path d="M2 4h2M6 4h13M2 10h2M6 10h13M2 16h2M6 16h13" stroke="#fff" stroke-width="2"/></svg></button>
    <button aria-label="3D"><svg viewBox="0 0 20 20" class="lt"><path d="M10 1l8.500 4v10L10 19l-8.500-4V5zM1.500 5L10 8.500 18.500 5M10 8.500V19M3.500 8.500h3v5h-3M4 11h2M12.500 8.500v5q4 0 4-2.500t-4-2.500"/></svg></button>
    <button aria-label="JavaScript"><svg viewBox="0 0 20 20" class="lt"><path d="M5 15V3q0-2 2-2h11v3h-3v12q0 3-3 3H2v-3h9v3M15 4V1"/><text x="10" y="12" font-size="7" text-anchor="middle" class="js">JS</text></svg></button>
  </nav>
  <section class="list">
    <div class="listbar">
      <h2>Markupliste <svg class="ch"><use href="#chev"/></svg></h2>
      <button aria-label="Ausblenden"><svg width="20" height="18" viewBox="0 0 20 18" class="lt"><path d="M1.500 9q8.500-9 17 0q-8.500 9-17 0zM17 1L3 17"/><circle cx="10" cy="9" r="3"/></svg></button>
      <label class="search"><svg width="16" height="16" viewBox="0 0 16 16" class="lt"><circle cx="6.500" cy="6.500" r="5.500"/><path d="M10.500 10.500l5 5"/></svg><input placeholder="Suchen" aria-label="Suchen"><button aria-label="Leeren"><svg width="12" height="12" viewBox="0 0 12 12" class="lt"><path d="M1 1l10 10M11 1L1 11"/></svg></button></label>
      <button class="filter"><svg width="14" height="16" viewBox="0 0 14 16" class="lt"><path d="M1 1.500h12L8.500 8v6l-3-2V8z"/></svg>Filterliste</button>
      <button aria-label="Exportieren"><svg width="14" height="18" viewBox="0 0 14 18" class="lt"><path d="M4 6H.500v10.500h13V6H10M7 12V1.500M4 4.500l3-3 3 3"/></svg></button>
    </div>
    <table class="markups">
      <colgroup><col class="m1"><col class="m2"><col class="m3"><col class="m4"><col class="m5"><col class="m6"><col class="m7"><col class="m8"><col class="m9"><col class="m10"><col></colgroup>
      <thead><tr><th class="sorted"><div class="hd"><i class="minus"></i>Betreff<svg class="ch end"><use href="#chevup"/></svg></div></th><th>Seitenbeschr...</th><th>Kommentare</th><th>Verfasser</th><th>Datum</th><th><div class="hd">Status<svg width="18" height="18" viewBox="0 0 18 18" class="lt end"><path d="M3 7v10M9 1v9M9 14v3M15 7v10M3 1v2M15 1v2"/><circle cx="3" cy="5" r="1.500"/><circle cx="9" cy="12" r="1.500"/><circle cx="15" cy="5" r="1.500"/></svg></div></th><th>Etikett</th><th>Farbe</th><th>Ebene</th><th>Raum</th><th></th></tr></thead>
      <tbody>
        <tr class="group"><td><div class="gr"><svg class="ch"><use href="#chev"/></svg>Deckbelag SDA (3)</div></td><td></td><td></td><td></td><td></td><td></td><td></td><td></td><td></td><td></td><td></td></tr>
        <tr><td><div class="nm"><svg><use href="#r-area"/></svg>Deckbelag SDA</div></td><td>[1] 131 Sit Teil 1</td><td>163.32 m²</td><td>FarganusD</td><td>05.07.2022 11:15:58</td><td></td><td>223.423.301</td><td><i class="sw"></i></td><td><div class="ly"><svg><use href="#eye"/></svg>primar kies</div></td><td></td><td></td></tr>
        <tr><td><div class="nm"><svg><use href="#r-area"/></svg>Deckbelag SDA</div></td><td>[1] 133 Sit Teil 3</td><td>265.02 m²</td><td>FarganusD</td><td>06.07.2022 13:21:09</td><td></td><td>223.423.301</td><td><i class="sw"></i></td><td><div class="ly"><svg><use href="#eye"/></svg>Sekundär</div></td><td></td><td></td></tr>
        <tr><td><div class="nm"><svg><use href="#r-area"/></svg>Deckbelag SDA</div></td><td>[1] 134 Sit Teil 4</td><td>118.5 m²</td><td>FarganusD</td><td>06.07.2022 13:21:17</td><td></td><td>223.423.301</td><td><i class="sw"></i></td><td><div class="ly"><svg><use href="#eye"/></svg>Sekundär</div></td><td></td><td></td></tr>
        <tr class="group next"><td><div class="gr"><svg class="ch"><use href="#chev"/></svg>Doppel Bundstein (4)</div></td><td></td><td></td><td></td><td></td><td></td><td></td><td></td><td></td><td></td><td></td></tr>
        <tr class="sel"><td><div class="nm"><svg><use href="#r-poly"/></svg>Doppel Bundstein</div></td><td>[1] 131 Sit Teil 1</td><td>14.03 m</td><td>FarganusD</td><td>06.07.2022 14:17:19</td><td></td><td>222.332.201</td><td><i class="sw g"></i></td><td><div class="ly"><svg><use href="#eye"/></svg>Abschlüsse</div></td><td></td><td></td></tr>
        <tr><td><div class="nm"><svg><use href="#r-poly"/></svg>Doppel Bundstein</div></td><td>[1] 131 Sit Teil 1</td><td>11.89 m</td><td>FarganusD</td><td>06.07.2022 14:17:29</td><td></td><td>222.332.201</td><td><i class="sw g"></i></td><td><div class="ly"><svg><use href="#eye"/></svg>Abschlüsse</div></td><td></td><td></td></tr>
      </tbody>
    </table>
    <div class="callbox row-box"></div>
  </section>
</div>
</body>
</html>
```
FILE: styles.css
```css
* { box-sizing: border-box; }
html, body { height: 100%; }
body { margin: 0; display: flex; flex-direction: column; overflow: hidden; background: #2d2d2d; color: #fff; font: 12px/16px Roboto, sans-serif; }
button { font: inherit; color: inherit; background: none; border: 0; padding: 0; display: flex; align-items: center; justify-content: center; }
input { font: inherit; color: inherit; background: none; border: 0; padding: 0; min-width: 0; outline: 0; }
h2, h3 { margin: 0; font-size: 14px; }
svg { display: block; flex: none; }
i { display: block; flex: none; }
.defs { display: none; }
.ln, .lt { fill: none; stroke: #fff; }
.dim { fill: none; stroke: #666; }
.dark { fill: none; stroke: #444; }
.ch { width: 12px; height: 12px; }

.titlebar { height: 24px; flex: none; display: flex; align-items: center; gap: 2px; padding-left: 2px; background: #fff; color: #000; border-top: 1px solid #000; border-bottom: 1px solid #ddd; font-family: "Open Sans", sans-serif; font-size: 11px; }
.vmlogo { width: 18px; height: 18px; }
.playerbar { height: 32px; flex: none; display: flex; align-items: center; padding-left: 7px; background: #fff; color: #000; border-bottom: 1px solid #ddd; font-family: "Open Sans", sans-serif; font-size: 11px; }
.playerbar button { margin-right: 12px; }
.playerbar .player { gap: 9px; padding-right: 9px; border-right: 1px solid #ccc; height: 20px; margin-right: 15px; }
.tri { border: 4px solid transparent; border-top-color: #000; border-bottom: 0; }
.tri.grey { border-top-color: #888; margin-right: 13px; }
.playerbar .pause { gap: 4px; margin-right: 11px; }
.pause i { width: 4px; height: 16px; background: #ff6a1f; }

.menu { height: 25px; flex: none; background: #000; display: flex; gap: 25px; padding-left: 18px; font-size: 14px; }
.props { height: 36px; flex: none; display: flex; align-items: center; gap: 9px; padding-left: 7px; border-bottom: 1px solid #000; }
.grp { display: flex; align-items: center; gap: 5px; }
.ctl { height: 25px; border: 1px solid #808080; border-radius: 3px; display: flex; align-items: center; justify-content: space-between; padding: 0 7px 0 8px; }
.w44 { width: 45px; padding: 0 7px 0 2px; }
.w25 { width: 26px; padding: 0; justify-content: center; }
.w56 { width: 56px; }
.w86 { width: 86px; }
.total { width: 127px; }
.linesel { width: 114px; }
.green { width: 14px; height: 14px; background: #00ff40; border: 1px solid #ccc; }
.line { width: 82px; height: 2px; background: #fff; }
.dash { width: 18px; height: 2px; background: #bbb; }
.spin { padding: 0; }
.ud { width: 15px; height: 23px; border-right: 1px solid #808080; display: grid; grid-template-rows: 1fr 1fr; justify-items: center; align-items: center; }
.ud svg { width: 10px; height: 10px; }
.w46 { width: 45px; text-align: center; }
.w66 { width: 67px; text-align: right; padding-right: 8px; }

.work { flex: 1; display: flex; min-height: 0; border-bottom: 1px solid #000; }
.rail { width: 36px; flex: none; border-right: 1px solid #000; overflow: hidden; }
.rail button { width: 35px; height: 35px; }
.rail svg { width: 20px; height: 20px; margin: 0 1px 1px 0; }
.rail .on, .vc .on { background: #185884; }
.js { fill: #fff; stroke: none; font-weight: bold; }

.chest { width: 393px; flex: none; position: relative; display: flex; flex-direction: column; border-right: 1px solid #000; }
.chest h2 { height: 34px; flex: none; display: flex; align-items: center; gap: 10px; padding-left: 11px; }
.chestbody { flex: 1; min-height: 0; display: flex; color: #000; }
.sets { flex: 1; overflow: hidden; background: #d2d2c8; font-size: 12px; }
.gutter { width: 17px; background: #f0f0f0; padding: 111px 0 0 8px; }
.gutter i { width: 2px; height: 174px; background: #858585; }
.sets h3 { height: 35px; background: #2d2d2d; color: #fff; font-size: 12px; font-weight: 400; display: flex; align-items: center; gap: 10px; padding: 0 28px 1px 9px; }
.gear { width: 20px; height: 20px; margin-left: auto; }
.tools { height: 48px; display: flex; padding-left: 4px; }
.tools.first { height: 30px; overflow: hidden; align-items: flex-end; }
.tools svg { width: 40px; height: 48px; }
.red { --tint: transparent; --tint2: #e27c78; --edge: red; --ink: red; --mark: red; }
.red svg:nth-child(3) { --tint: red; }
.yellow { --tint: #ffff80; --edge: #ff8c1a; --mark: #ff800a; }
.cyan { --tint: #80ffff; --tint2: #b0e4e0; --edge: #0000ff; --mark: #0000ff; }
.purple { --mark: #7d0a87; }
.orule { --rule: #ff800a; }
.hedge { --houseedge: #7d0a87; }
.symbols { width: 100%; table-layout: fixed; border-collapse: collapse; }
.c45 { width: 45px; }
.c124 { width: 124px; }
.symbols th { height: 18px; background: #dcdcd2; font-weight: 400; text-align: left; padding: 0 2px; border-right: 1px solid #c8c8be; }
.symbols td { height: 32px; padding: 0 2px; border-right: 1px solid #c8c8be; }
.symbols .tall td { height: 38px; padding-top: 6px; }
.symbols .tip td { vertical-align: top; padding-top: 2px; }
.symbols td svg { width: 30px; height: 12px; margin-left: 5px; }
.sizer { height: 35px; flex: none; display: flex; align-items: center; gap: 14px; padding: 0 10px 0 12px; }
.sizer input { flex: 1; appearance: none; height: 4px; border-radius: 2px; background: #3a3a3a; margin: 0; }
.sizer input::-webkit-slider-thumb { appearance: none; width: 12px; height: 12px; border-radius: 50%; background: #8c8c8c; }
.callbox { position: absolute; border: 3px solid #0aae90; box-shadow: 2px 3px 5px rgba(0, 0, 0, .5), inset 2px 3px 5px rgba(0, 0, 0, .5); pointer-events: none; z-index: 2; }
.tools-box { left: -11px; right: -2px; top: 221px; height: 107px; }

.doc { flex: 1; min-width: 0; display: flex; flex-direction: column; }
.tabs { height: 35px; flex: none; display: flex; }
.tab { display: flex; align-items: center; gap: 16px; padding: 0 9px; background: #4d4d4d; border-right: 1px solid #000; }
.canvas { flex: 1; min-height: 0; background: #4d4d4d; padding: 0 7px 0 183px; overflow: hidden; }
.plan { width: 100%; height: 369px; border: 1px solid #0a84d8; border-top: 0; font-family: "Liberation Sans", sans-serif; }
.lab { font-size: 12px; fill: #f00; text-anchor: middle; }
.lab.k { font-size: 13px; fill: #222; }
.tb { font-size: 18px; text-anchor: middle; }
.tb .h { font-size: 24px; }
.tb .b { font-size: 22px; font-weight: bold; }
.tb .s { font-size: 12px; }
.tb .xs { font-size: 8px; }
.legend { font-size: 7px; }
.legend .b2 { font-size: 11px; font-weight: bold; }
.viewbar { height: 36px; flex: none; display: grid; grid-template-columns: 1fr auto 1fr; align-items: center; overflow: hidden; }
.vl, .vc { display: flex; align-items: center; height: 36px; }
.vl { padding-left: 9px; gap: 18px; }
.sep { width: 1px; height: 18px; background: #777; }
.vl .sep { margin: 0 -6px 0 -5px; }
.vc button { width: 36px; height: 36px; }
.page { width: 246px; height: 22px; border: 1px solid #808080; border-radius: 2px; text-align: center; margin: 0 3px; }
.vc { padding-left: 45px; }
.dims { font-size: 14px; justify-self: end; }

.bottom { height: 206px; flex: none; display: flex; overflow: hidden; }
.list { flex: 1; min-width: 0; position: relative; }
.listbar { height: 36px; display: flex; align-items: center; padding-left: 11px; }
.listbar h2 { display: flex; align-items: center; gap: 10px; margin-right: 13px; }
.search { width: 326px; height: 25px; border: 1px solid #808080; border-radius: 2px; display: flex; align-items: center; gap: 8px; padding: 0 6px; margin: 0 28px 0 8px; }
.search input { flex: 1; }
.search input::placeholder { color: #fff; }
.filter { gap: 5px; font-size: 14px; font-weight: 700; margin-right: 42px; }
.markups { width: 100%; table-layout: fixed; border-collapse: separate; border-spacing: 0; }
.m1 { width: 203px; } .m2 { width: 92px; } .m3 { width: 218px; } .m4 { width: 94px; } .m5 { width: 126px; } .m6 { width: 124px; } .m7 { width: 113px; } .m8 { width: 80px; } .m9 { width: 120px; } .m10 { width: 100px; }
.markups th { height: 35px; background: #3d3d3d; border-right: 1px solid #888; text-align: left; padding: 0 0 3px 9px; font-weight: 500; white-space: nowrap; overflow: hidden; }
.markups th.sorted { border-bottom: 2px solid #0a84d8; padding: 0 9px 0 5px; }
.hd { display: flex; align-items: center; }
.minus { width: 11px; height: 12px; border: 1px solid #fff; margin-right: 15px; padding: 4px 2px; background: #fff content-box; }
.end { margin: 0 9px 0 auto; }
.sorted .end { margin-right: 0; }
.markups td { height: 22px; padding: 0 0 0 2px; border-right: 1px solid #888; white-space: nowrap; overflow: hidden; }
.markups td:last-child, .markups th:last-child { border-right: 0; }
.markups .group td { height: 19px; font-weight: 500; vertical-align: top; }
.markups .next td { height: 21px; border-top: 2px solid #888; }
.gr { display: flex; align-items: center; gap: 10px; padding-left: 7px; }
.nm { display: flex; align-items: center; gap: 3px; padding-left: 42px; height: 20px; }
.nm svg { width: 20px; height: 20px; }
.sel td { background: #185884; }
.sw { width: 12px; height: 12px; background: #000; margin-left: 31px; }
.sw.g { background: #00ff40; }
.ly { display: flex; align-items: center; gap: 7px; padding-left: 2px; }
.ly svg { width: 14px; height: 14px; }
.row-box { left: -5px; top: 166px; width: 1176px; height: 37px; }
```
